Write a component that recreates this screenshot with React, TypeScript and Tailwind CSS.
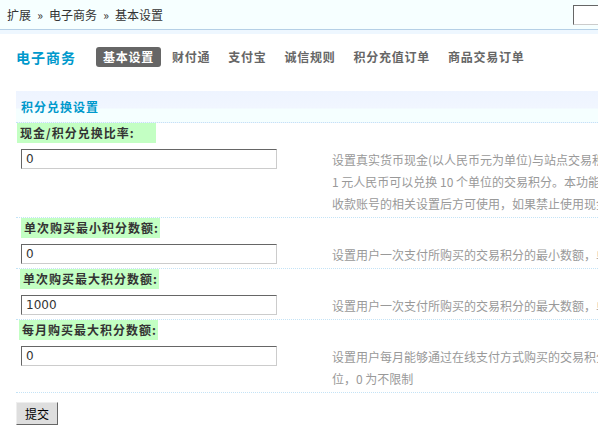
import React from "react";

type Row = {
  label: string;
  value: string;
  tips: string[];
  shift?: string;
};

const rows: Row[] = [
  {
    label: "现金/积分兑换比率:",
    value: "0",
    shift: "ml-[1px]",
    tips: [
      "设置真实货币现金(以人民币元为单位)与站点交易积分间的兑换比率，例如设置为 10，则",
      "1 元人民币可以兑换 10 个单位的交易积分。本功能需开启交易积分，并成功设置支付宝",
      "收款账号的相关设置后方可使用，如果禁止使用现金直接购买交易积分，请设置为 0",
    ],
  },
  {
    label: "单次购买最小积分数额:",
    value: "0",
    shift: "ml-[5px]",
    tips: ["设置用户一次支付所购买的交易积分的最小数额，单位为交易积分，0 为不限制"],
  },
  {
    label: "单次购买最大积分数额:",
    value: "1000",
    shift: "ml-[4px]",
    tips: ["设置用户一次支付所购买的交易积分的最大数额，单位为交易积分，0 为不限制"],
  },
  {
    label: "每月购买最大积分数额:",
    value: "0",
    shift: "ml-[3px]",
    tips: [
      "设置用户每月能够通过在线支付方式购买的交易积分的最大数额，单",
      "位，0 为不限制",
    ],
  },
];

const tabs = ["基本设置", "财付通", "支付宝", "诚信规则", "积分充值订单", "商品交易订单"];

function Sep() {
  return <span className="inline-block w-[18px] text-center">»</span>;
}

export default function App() {
  return (
    <div className="w-[598px] h-[442px] overflow-hidden bg-white text-[12px] text-[#333] font-['Noto_Sans_CJK_SC',sans-serif]">
      <div className="w-[1100px]">
        {/* top bar */}
        <div className="flex h-[30px] items-center bg-[#f6ffff] border-b border-[#b5d0e6]">
          <div className="w-[573px] pl-[7px] leading-[20px]">
            扩展
            <Sep />
            电子商务
            <Sep />
            基本设置
          </div>
          <input
            className="h-[20px] w-[140px] bg-white border border-t-[#666] border-l-[#666] border-r-[#ccc] border-b-[#ccc] outline-none"
            defaultValue=""
          />
        </div>
        <div className="h-[4px] bg-[#eef7ff]" />

        {/* title + tabs */}
        <div className="flex items-center h-[20px] mt-[13px] pl-[16px]">
          <h3 className="mr-[20px] text-[14px] font-bold tracking-[1px] text-[#0099cc] leading-[20px]">
            电子商务
          </h3>
          <ul className="flex items-center">
            {tabs.map((t, i) => (
              <li
                key={t}
                className={`mr-[4px] px-[7px] h-[20px] leading-[20px] font-bold tracking-[0.75px] ${
                  i === 0 ? "bg-[#666] text-white rounded-[3px]" : "text-[#666]"
                }`}
              >
                {t}
              </li>
            ))}
          </ul>
        </div>

        {/* settings table */}
        <div className="mt-[24px] ml-[16px]">
          <div className="flex items-center h-[32px] pl-[5px] border-b border-dotted border-[#c4e3f6] bg-[linear-gradient(to_bottom,#eef4ff_0%,#f1f6ff_55%,#f5ffff_58%,#f5ffff_100%)]">
            <span className="font-bold tracking-[1px] text-[#0099cc]">积分兑换设置</span>
          </div>

          {rows.map((r) => (
            <div key={r.label}>
              <div className="flex h-[20px]">
                <span
                  className={`${r.shift} w-[139px] h-[20px] leading-[20px] pl-[3px] bg-[#c3ffc3] font-bold tracking-[1px] text-[#333] whitespace-nowrap`}
                >
                  {r.label}
                </span>
              </div>
              <div className="grid grid-cols-[316px_1fr] pt-[6px] pb-[2px] border-b border-dotted border-[#c4e3f6]">
                <div className="pl-[5px]">
                  <input
                    className="block h-[20px] w-[256px] px-[4px] bg-white border border-t-[#666] border-l-[#666] border-r-[#ccc] border-b-[#ccc] text-[12px] text-[#333] font-['DejaVu_Sans',sans-serif] outline-none"
                    defaultValue={r.value}
                  />
                </div>
                <div className="text-[#999] leading-[22px] whitespace-nowrap overflow-hidden">
                  {r.tips.map((line) => (
                    <div key={line}>{line}</div>
                  ))}
                </div>
              </div>
            </div>
          ))}

          <button className="mt-[9px] h-[23px] w-[42px] bg-[#dedede] border border-t-[#eee] border-l-[#eee] border-r-[#666] border-b-[#666] text-[12px] text-black">
            提交
          </button>
        </div>
      </div>
    </div>
  );
}
